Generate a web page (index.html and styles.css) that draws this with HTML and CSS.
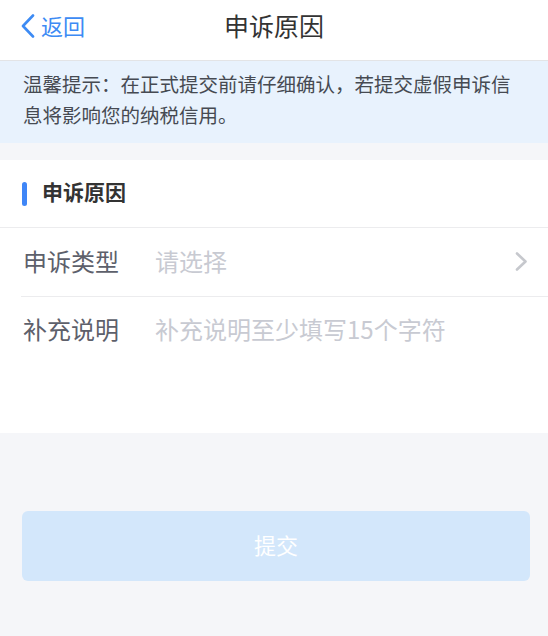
FILE: index.html
```html
<!DOCTYPE html>
<html lang="zh-CN">
<head>
<meta charset="utf-8">
<title>申诉原因</title>
<link rel="stylesheet" href="styles.css">
</head>
<body>
<div class="page">
  <header class="navbar">
    <a class="back">
      <svg class="back-icon" width="14" height="24" viewBox="0 0 14 24"><polyline points="12,1.5 2,12 12,22.5" fill="none" stroke="#3d8bf4" stroke-width="2.6" stroke-linecap="round" stroke-linejoin="round"/></svg>
      <span class="back-text">返回</span>
    </a>
    <h1 class="nav-title">申诉原因</h1>
    <span class="nav-spacer"></span>
  </header>
  <div class="notice">温馨提示：在正式提交前请仔细确认，若提交虚假申诉信息将影响您的纳税信用。</div>
  <section class="card">
    <div class="card-title"><span class="bar"></span><span class="card-title-text">申诉原因</span></div>
    <div class="row">
      <span class="label">申诉类型</span>
      <span class="placeholder">请选择</span>
      <svg class="chev" width="13" height="19" viewBox="0 0 13 19"><polyline points="2,1.5 10.5,9.5 2,17.5" fill="none" stroke="#c6c8cd" stroke-width="2.6" stroke-linecap="round" stroke-linejoin="round"/></svg>
    </div>
    <div class="row row-text">
      <span class="label">补充说明</span>
      <span class="placeholder">补充说明至少填写15个字符</span>
    </div>
  </section>
  <div class="actions">
    <button class="submit">提交</button>
  </div>
</div>
</body>
</html>
```
FILE: styles.css
```css
html, body {
  margin: 0;
  padding: 0;
}
body {
  background: #f5f6f9;
  font-family: "Noto Sans CJK SC", "Noto Sans", sans-serif;
  width: 548px;
  height: 636px;
  overflow: hidden;
}
.page {
  display: flex;
  flex-direction: column;
}
.navbar {
  height: 52px;
  padding-bottom: 8px;
  background: #fff;
  border-bottom: 1px solid #e3e4e6;
  display: grid;
  grid-template-columns: 1fr auto 1fr;
  align-items: center;
}
.back {
  display: flex;
  align-items: center;
  color: #3d8bf4;
  font-size: 22px;
  padding-left: 21px;
  gap: 6px;
}
.back-icon {
  display: block;
}
.back-text {
  margin-bottom: 2px;
}
.nav-title {
  margin: 0;
  font-size: 25px;
  font-weight: 400;
  color: #333;
  line-height: 1;
  padding-bottom: 2px;
}
.notice {
  background: #e8f2fd;
  color: #464a52;
  font-size: 19.5px;
  line-height: 31px;
  padding: 7px 23px 13px;
}
.card {
  margin-top: 17px;
  background: #fff;
}
.card-title {
  height: 67px;
  border-bottom: 1px solid #ececee;
  display: flex;
  align-items: center;
  padding-left: 22px;
  gap: 15px;
  font-size: 21px;
  font-weight: 700;
  color: #333;
}
.card-title-text {
  margin-bottom: 5px;
}
.bar {
  width: 5px;
  height: 24px;
  border-radius: 3px;
  background: #3f86f7;
}
.row {
  height: 68px;
  margin-left: 21px;
  padding: 0 20px 0 2px;
  display: flex;
  align-items: center;
  font-size: 24px;
  border-bottom: 1px solid #ececee;
}
.row .label,
.row .placeholder {
  margin-bottom: 4px;
}
.row-text {
  height: 121px;
  padding-top: 15px;
  align-items: flex-start;
  border-bottom: none;
  line-height: 34px;
}
.row-text .label,
.row-text .placeholder {
  margin-bottom: 0;
}
.label {
  color: #5d606b;
  width: 132px;
  flex: none;
}
.placeholder {
  color: #c8cad2;
  flex: 1;
}
.chev {
  display: block;
  flex: none;
  margin-bottom: 2px;
}
.actions {
  padding: 78px 18px 0 22px;
}
.submit {
  width: 100%;
  height: 70px;
  border: none;
  border-radius: 6px;
  background: #d3e7fb;
  color: #fff;
  font-family: inherit;
  font-size: 22px;
  padding: 0 0 4px;
  display: block;
}
```
